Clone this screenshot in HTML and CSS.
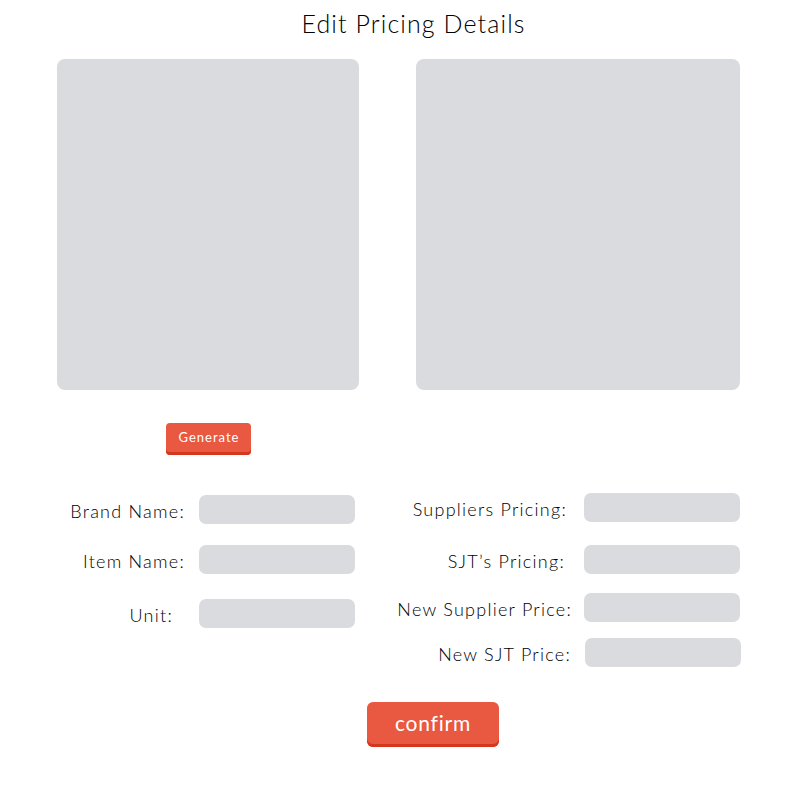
FILE: index.html
```html
<!DOCTYPE html>
<html>
<head>
<meta charset="utf-8">
<link rel="stylesheet" href="styles.css">
</head>
<body>
<div class="page">
  <h1 class="title">Edit Pricing Details</h1>
  <div class="images">
    <div class="image-left"></div>
    <div class="image-right"></div>
  </div>
  <div class="generate-row">
    <button class="btn btn-small">Generate</button>
  </div>
  <div class="form">
    <div class="col col-left">
      <div class="row r1"><span class="label">Brand Name:</span><span class="input"></span></div>
      <div class="row r2"><span class="label">Item Name:</span><span class="input"></span></div>
      <div class="row r3"><span class="label unit">Unit:</span><span class="input"></span></div>
    </div>
    <div class="col col-right">
      <div class="row s1"><span class="label">Suppliers Pricing:</span><span class="input"></span></div>
      <div class="row s2"><span class="label">SJT’s Pricing:</span><span class="input"></span></div>
      <div class="row s3"><span class="label">New Supplier Price:</span><span class="input"></span></div>
      <div class="row s4"><span class="label">New SJT Price:</span><span class="input"></span></div>
    </div>
  </div>
  <div class="confirm-row">
    <button class="btn btn-large">confirm</button>
  </div>
</div>
</body>
</html>
```

FILE: styles.css
```css
html, body {
  margin: 0;
  padding: 0;
  background: #ffffff;
}
body {
  font-family: "Lato", "Open Sans", sans-serif;
  color: #111111;
}
.page {
  width: 800px;
  height: 800px;
  position: relative;
}
.title {
  margin: 0;
  padding-top: 8px;
  height: 50px;
  box-sizing: border-box;
  text-align: center;
  padding-left: 27px;
  font-weight: 300;
  font-size: 25px;
  line-height: 30px;
  letter-spacing: 1.1px;
  color: #000000;
}
.images {
  display: flex;
  padding-left: 57px;
  padding-top: 9px;
  gap: 57px;
}
.image-left, .image-right {
  background: #dadbdf;
  border-radius: 8px;
  height: 331px;
}
.image-left { width: 302px; }
.image-right { width: 324px; }
.generate-row {
  padding-left: 166px;
  padding-top: 33px;
  height: 32px;
}
.btn {
  border: none;
  background: #e95841;
  color: #ffffff;
  font-family: "Lato", sans-serif;
  border-radius: 4px;
  box-shadow: inset 0 -3px 0 #d4361f;
  padding: 0;
  cursor: pointer;
}
.btn-small {
  width: 85px;
  height: 32px;
  font-size: 13px;
  padding-bottom: 4px;
  padding-left: 1px;
  letter-spacing: 1px;
}
.form {
  display: flex;
  margin-top: 39px;
  height: 174px;
}
.col {
  display: flex;
  flex-direction: column;
}
.row {
  display: flex;
  align-items: center;
}
.label {
  text-align: right;
  font-size: 18px;
  font-weight: 300;
  letter-spacing: 1.25px;
  color: #000000;
  box-sizing: border-box;
  padding-top: 2px;
}
.input {
  display: block;
  height: 29px;
  width: 156px;
  background: #dadbdf;
  border-radius: 7px;
}
.col-left { width: 355px; }
.col-left .label { width: 199px; padding-right: 14px; }
.col-left .label.unit { padding-right: 26px; }
.r1 { margin-top: 1px; }
.r2 { margin-top: 21px; }
.r3 { margin-top: 25px; }
.col-right .label { width: 585px; }
.s1 { margin-top: -1px; margin-left: -356px; }
.s1 .label { padding-right: 17px; }
.s2 { margin-top: 23px; margin-left: -356px; }
.s2 .label { padding-right: 19px; }
.s3 { margin-top: 19px; margin-left: -356px; }
.s3 .label { padding-right: 12px; }
.s4 { margin-top: 16px; margin-left: -355px; }
.s4 .label { padding-right: 14px; }
.confirm-row {
  padding-left: 367px;
  padding-top: 34px;
}
.btn-large {
  width: 132px;
  height: 45px;
  font-size: 21px;
  padding-bottom: 4px;
  border-radius: 6px;
  letter-spacing: 0.8px;
}
```
